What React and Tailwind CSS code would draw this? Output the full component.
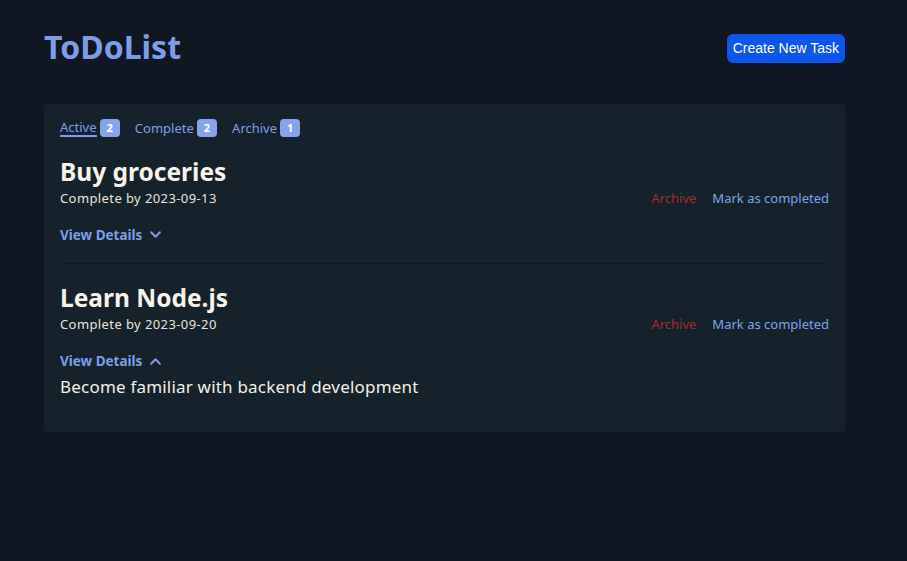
import { useState } from "react";

const tasks = [
  { id: 1, title: "Buy groceries", due: "2023-09-13", details: "Pick up milk, eggs and bread", open: false },
  { id: 2, title: "Learn Node.js", due: "2023-09-20", details: "Become familiar with backend development", open: true },
];

const Chevron = ({ up }) => (
  <svg width="15" height="15" viewBox="0 0 24 24" fill="none" stroke="currentColor" strokeWidth="3.2" strokeLinecap="round" strokeLinejoin="round">
    {up ? <path d="M5 15.5l7-7 7 7" /> : <path d="M5 8.5l7 7 7-7" />}
  </svg>
);

const TaskItem = ({ task, last }) => {
  const [open, setOpen] = useState(task.open);

  return (
    <div className={last ? "pt-[19px] pb-[33px]" : "pt-[20px] pb-[18px] border-b border-[#0f1a20]"}>
      <h2 className="text-[24.5px] font-bold text-[#f7f3ea] leading-[30px]">{task.title}</h2>
      <div className="flex items-center justify-between mt-[2px]">
        <p className="text-[13px] tracking-[0.4px] text-[#e8e4dc]">Complete by {task.due}</p>
        <div className="flex gap-[16px] text-[13px]">
          <button className="text-[#a52b2b]">Archive</button>
          <button className="text-[#7fa2ea]">Mark as completed</button>
        </div>
      </div>
      <button
        onClick={() => setOpen(!open)}
        className={`${last ? "mt-[17px]" : "mt-[16px]"} flex items-center gap-[6px] text-[13.5px] font-bold text-[#7c9ee8]`}
      >
        View Details <Chevron up={open} />
      </button>
      {open && <p className="mt-[2px] text-[17px] tracking-[0.2px] text-[#f3efe6]">{task.details}</p>}
    </div>
  );
};

const App = () => {
  const tabs = [
    { name: "Active", count: 2 },
    { name: "Complete", count: 2 },
    { name: "Archive", count: 1 },
  ];

  return (
    <div className="min-h-screen bg-[#111722] font-['Noto_Sans',sans-serif]">
      <div className="w-[801px] ml-[44px] pt-[27px]">
        <div className="flex items-center justify-between">
          <h1 className="text-[32px] font-bold leading-[40px] text-[#7c9ee8]">ToDoList</h1>
          <button className="mt-[2px] rounded-md bg-[#0c56ec] px-[6px] py-[5px] text-[14px] leading-[19px] text-white font-['Liberation_Sans',sans-serif]">
            Create New Task
          </button>
        </div>

        <div className="mt-[37px] rounded bg-[#15222b] px-4 pt-[15px]">
          <div className="flex gap-[15px] text-[13px] text-[#7c9ee8]">
            {tabs.map((t, i) => (
              <div key={t.name} className="flex items-center gap-[3px]">
                <span className={i === 0 ? "border-b-2 border-[#7c9ee8] leading-[15px]" : "leading-[15px]"}>
                  {t.name}
                </span>
                <span className="rounded bg-[#86a4ec] px-[7px] text-[11px] font-bold leading-[18px] text-white">
                  {t.count}
                </span>
              </div>
            ))}
          </div>

          {tasks.map((task, i) => (
            <TaskItem key={task.id} task={task} last={i === tasks.length - 1} />
          ))}
        </div>
      </div>
    </div>
  );
};

export default App;
